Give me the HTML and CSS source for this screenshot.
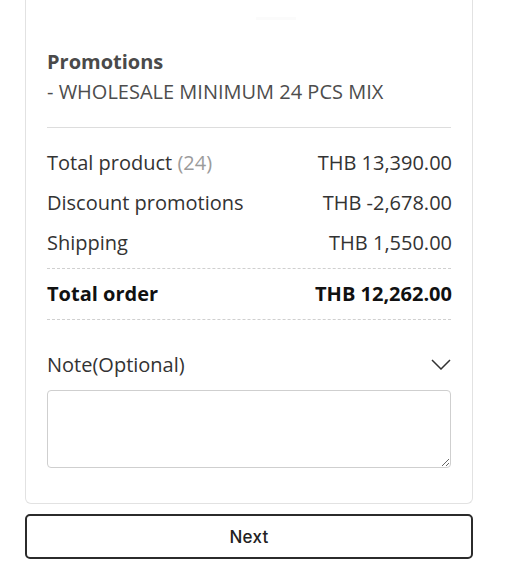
FILE: index.html
```html
<!DOCTYPE html>
<html>
<head>
<meta charset="utf-8">
<link rel="stylesheet" href="styles.css">
</head>
<body>
<div class="page">
  <div class="card">
    <div class="handle"></div>
    <div class="promo">
      <div class="promo-title">Promotions</div>
      <div class="promo-item">- WHOLESALE MINIMUM 24 PCS MIX</div>
    </div>
    <div class="summary">
      <div class="row"><span>Total product <span class="muted">(24)</span></span><span>THB 13,390.00</span></div>
      <div class="row"><span>Discount promotions</span><span>THB -2,678.00</span></div>
      <div class="row"><span>Shipping</span><span>THB 1,550.00</span></div>
      <div class="row total"><span>Total order</span><span>THB 12,262.00</span></div>
    </div>
    <div class="note">
      <div class="note-head">
        <span>Note(Optional)</span>
        <svg class="chev" width="20" height="11" viewBox="0 0 20 11"><path d="M1 1 L10 10 L19 1" fill="none" stroke="#333" stroke-width="1.5"/></svg>
      </div>
      <textarea class="note-input"></textarea>
    </div>
  </div>
  <button class="next">Next</button>
</div>
</body>
</html>
```
FILE: styles.css
```css
html, body { margin: 0; padding: 0; background: #fff; }
body { font-family: "Open Sans", "Liberation Sans", sans-serif; color: #333; }
.page { padding: 0 0 0 25px; width: 448px; }
.card {
  border: 1px solid #e2e2e2;
  border-top: none;
  border-radius: 0 0 6px 6px;
  padding: 0 21px 35px;
  position: relative;
}
.handle {
  position: absolute;
  top: 17px; left: 230px;
  width: 40px; height: 3px;
  background: #fbfbfb;
}
.promo { padding-top: 47px; padding-bottom: 20px; border-bottom: 1px solid #ddd; }
.promo-title { font-size: 20px; line-height: 30px; font-weight: 700; color: #4a4a4a; }
.promo-item { font-size: 20px; line-height: 30px; color: #4d4d4d; }
.summary { padding-top: 15px; }
.row {
  display: flex; justify-content: space-between; align-items: center;
  font-size: 20px; line-height: 40px; color: #333;
}
.row > span:last-child { margin-right: -1px; }
.muted { color: #9b9b9b; }
.row.total {
  font-weight: 700; color: #111;
  border-top: 1px dashed #d0d0d0;
  border-bottom: 1px dashed #d0d0d0;
  margin-top: 5px;
  padding: 5px 0;
}
.note { padding-top: 25px; }
.note-head {
  display: flex; justify-content: space-between; align-items: center;
  font-size: 20px; line-height: 40px; color: #333;
}
.chev { margin-top: -2px; }
.note-input {
  display: block; box-sizing: border-box;
  width: 100%; height: 78px; margin: 5px 0 0;
  border: 1px solid #cfcfcf; border-radius: 4px;
  resize: vertical; font-family: inherit;
}
.next {
  display: block; box-sizing: border-box;
  width: 448px; height: 45px; margin-top: 10px;
  background: #fff; border: 2px solid #2b2b2b; border-radius: 5px;
  font-family: Inter, "Open Sans", sans-serif; font-size: 17px; font-weight: 500; color: #222;
  letter-spacing: 0.3px;
}
```
